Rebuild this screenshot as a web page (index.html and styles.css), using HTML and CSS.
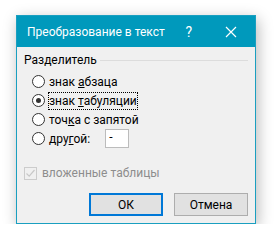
FILE: index.html
```html
<!DOCTYPE html>
<html lang="ru">
<head>
    <meta charset="UTF-8" />
    <title>Преобразование в текст</title>
    <link rel="stylesheet" href="styles.css">
</head>
<body>
    <div class="dialog">
        <div class="titlebar">
            <span class="title">Преобразование в текст</span>
            <span class="help">?</span>
            <svg class="close" width="12" height="12" viewBox="0 0 12 12">
                <path d="M1 1 L11 11 M11 1 L1 11" stroke="#fff" stroke-width="1.2" fill="none" />
            </svg>
        </div>
        <div class="content">
            <div class="group">
                <span class="group-label">Разделитель</span>
                <span class="group-line"></span>
            </div>
            <div class="options">
                <div class="option">
                    <span class="radio"></span>
                    <span class="label">знак <u>а</u>бзаца</span>
                </div>
                <div class="option">
                    <span class="radio checked"></span>
                    <span class="label focused">знак <u>т</u>абуляции</span>
                </div>
                <div class="option">
                    <span class="radio"></span>
                    <span class="label">точ<u>к</u>а с запятой</span>
                </div>
                <div class="option">
                    <span class="radio"></span>
                    <span class="label">дру<u>г</u>ой:</span>
                    <span class="textbox">-</span>
                </div>
            </div>
            <div class="check-row">
                <span class="checkbox">
                    <svg width="11" height="11" viewBox="0 0 11 11">
                        <path d="M1.5 5.5 L4.2 8.2 L9.5 2" stroke="#c8c8c8" stroke-width="1.2" fill="none" />
                    </svg>
                </span>
                <span class="disabled">вложенные таблицы</span>
            </div>
            <div class="buttons">
                <button class="btn default">ОК</button>
                <button class="btn">Отмена</button>
            </div>
        </div>
    </div>
</body>
</html>
```

FILE: styles.css
```css
body {
    background-color: #fff;
    font-family: Roboto, "Noto Sans", sans-serif;
    font-size: 12px;
    color: #000;
    margin: 0; padding: 0;
}
.dialog {
    margin: 15px 0 0 16px;
    width: 238px;
    height: 207px;
    border: 1px solid #1a9fc0;
    background-color: #f0f0f0;
    box-shadow: 2px 4px 14px rgba(0, 0, 0, 0.28);
    display: flex;
    flex-direction: column;
}
.titlebar {
    height: 31px;
    background-color: #0099bc;
    color: #fff;
    display: flex;
    align-items: center;
    padding: 0 0 0 10px;
    font-size: 12px;
    white-space: nowrap;
}
.title {
    flex: 1;
}
.help {
    font-size: 14px;
    margin-right: 33px;
}
.close {
    margin-right: 18px;
}
.content {
    flex: 1;
    padding: 5px 7px 0 7px;
    display: flex;
    flex-direction: column;
}
.group {
    display: flex;
    align-items: center;
    height: 16px;
}
.group-line {
    flex: 1;
    height: 1px;
    background-color: #dcdcdc;
    margin-left: 3px;
}
.options {
    margin-top: 7px;
    padding-left: 8px;
    display: flex;
    flex-direction: column;
    gap: 6px;
}
.option {
    display: flex;
    align-items: center;
    height: 13px;
}
.radio {
    width: 11px;
    height: 11px;
    border: 1px solid #333;
    border-radius: 50%;
    background-color: #fff;
    margin-right: 3px;
    display: flex;
    align-items: center;
    justify-content: center;
}
.radio.checked::after {
    content: "";
    width: 5px;
    height: 5px;
    border-radius: 50%;
    background-color: #333;
}
.label {
    padding: 1px 0;
    border: 1px dotted transparent;
}
.label.focused {
    border-color: #000;
}
.textbox {
    border: 1px solid #bcbcbc;
    background-color: #fff;
    margin-left: 14px;
    padding-left: 3px;
    box-sizing: border-box;
    line-height: 15px;
    width: 24px;
    height: 19px;
}
.check-row {
    display: flex;
    align-items: center;
    margin-top: 21px;
}
.checkbox {
    width: 11px;
    height: 11px;
    border: 1px solid #cccccc;
    margin-right: 5px;
    display: flex;
}
.disabled {
    color: #8d8d8d;
}
.buttons {
    display: flex;
    justify-content: flex-end;
    gap: 11px;
    margin-top: 13px;
}
.btn {
    width: 74px;
    height: 23px;
    font-family: Roboto, "Noto Sans", sans-serif;
    font-size: 12px;
    background-color: #e1e1e1;
    border: 1px solid #adadad;
    color: #000;
    padding: 0;
}
.btn.default {
    border: 2px solid #0078d7;
}
```
